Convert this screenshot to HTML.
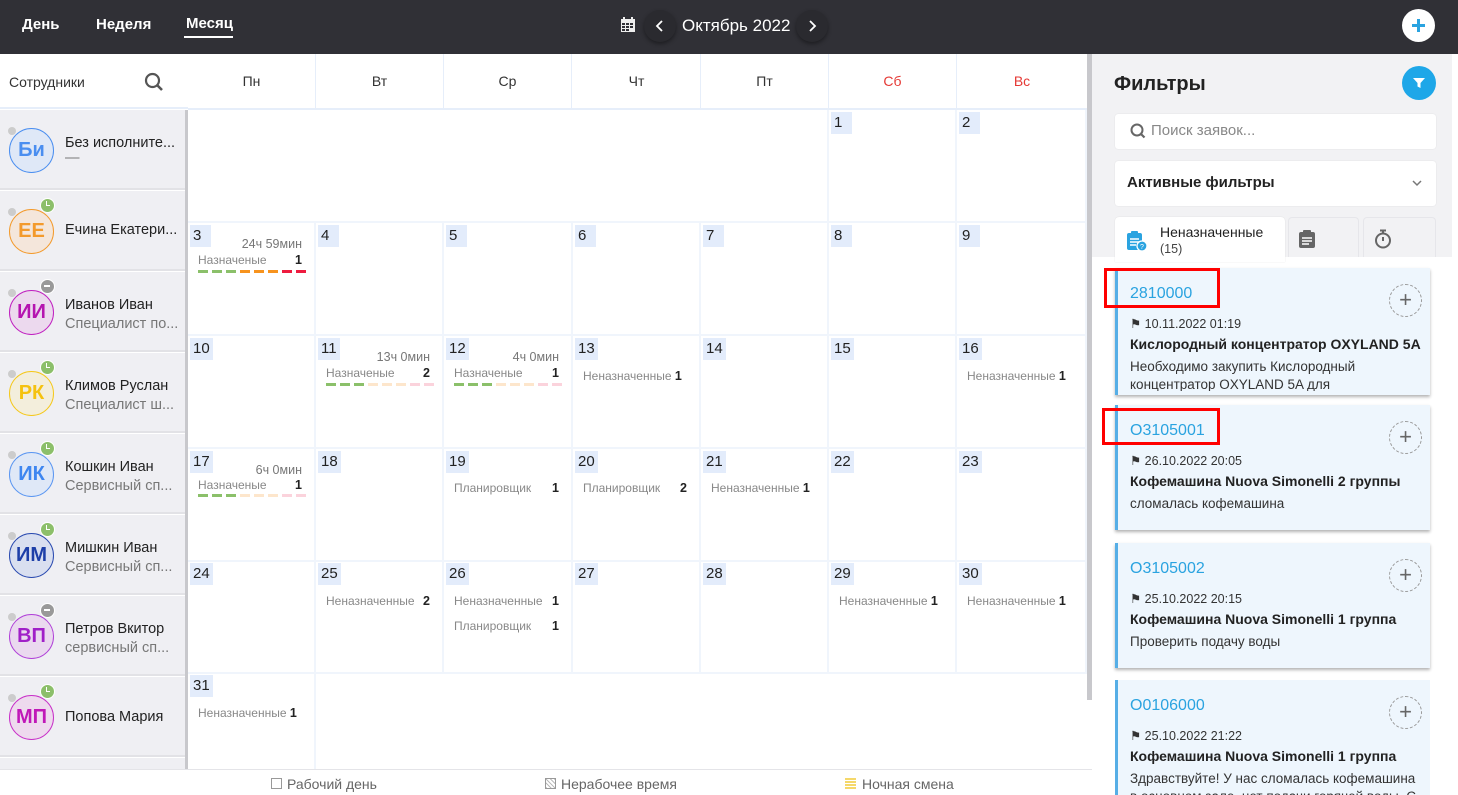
<!DOCTYPE html>
<html><head><meta charset="utf-8"><style>
*{box-sizing:border-box;margin:0;padding:0}
html,body{width:1458px;height:795px;overflow:hidden}
body{position:relative;background:#fff;font-family:"Liberation Sans",Roboto,sans-serif;color:#222}
.a{position:absolute}
.top{left:0;top:0;width:1458px;height:54px;background:#303036}
.tab{color:#fff;font-weight:bold;font-size:15px;top:16px}
.emp{left:0;width:185px;height:80px;background:#efeff3;border-bottom:2px solid #e2e2e6}
.av{position:absolute;left:9px;top:18px;width:45px;height:45px;border-radius:50%;border:1.5px solid;text-align:center;line-height:43px;font-size:20px;font-weight:bold}
.dot{position:absolute;left:8px;top:17px;width:8px;height:8px;border-radius:50%;background:#ccc}
.bd{position:absolute;left:40px;top:7px;width:15px;height:15px;border-radius:50%;background:#8cbf6a;border:1.5px solid #fff}
.bd:after{content:"";position:absolute;left:5px;top:2px;width:3px;height:4px;border-left:1.5px solid #fff;border-bottom:1.5px solid #fff}
.bd.g{background:#999}
.bd.g:after{left:3px;top:5px;width:6px;height:0;border:0;border-top:2px solid #fff}
.nm{position:absolute;left:65px;top:25px;font-size:14.5px;color:#222;white-space:nowrap}
.sb{position:absolute;left:65px;top:44px;font-size:14.5px;color:#777;white-space:nowrap}
.dh{top:54px;height:55px;width:128px;border-right:1px solid #e6eefa;text-align:center;line-height:55px;font-size:14px;color:#333}
.c{width:128px;height:113px;border-right:2px solid #f0f5fc;border-bottom:2px solid #f0f5fc}
.n{position:absolute;left:2px;top:2px;min-width:21px;height:22px;padding:0 3px;background:#e3ecfb;font-size:15px;line-height:22px;color:#222}
.t{position:absolute;right:12px;top:14px;font-size:12.5px;color:#777;white-space:nowrap}
.l{position:absolute;left:10px;right:12px;font-size:12px;color:#888;display:flex;justify-content:space-between;white-space:nowrap}
.l b{color:#222;font-size:12.5px}
.bars{position:absolute;left:10px;top:47px;display:flex;gap:4px}
.bars i{display:block;width:10px;height:3px}
.card{left:1115px;width:315px;background:#eef6fd;border-left:3px solid #56aee6;box-shadow:0 2px 3px rgba(0,0,0,.3);overflow:hidden}
.id{position:absolute;left:12px;top:17px;color:#2aa3e0;font-size:16px}
.pl{position:absolute;right:8px;top:16px;width:33px;height:33px;border-radius:50%;border:1px dashed #999;text-align:center;line-height:30px;font-size:22px;color:#666}
.dt{position:absolute;left:12px;top:48px;font-size:12.5px;color:#333}
.tl{position:absolute;left:12px;top:68px;font-size:14px;font-weight:bold;color:#222;white-space:nowrap}
.ds{position:absolute;left:12px;top:90px;font-size:13.5px;color:#333;line-height:18px;width:300px}
.red{border:3px solid #f00}
</style></head><body>
<div class="a top"></div>
<div class="a tab" style="left:22px">День</div>
<div class="a tab" style="left:96px">Неделя</div>
<div class="a tab" style="left:186px;top:15px">Месяц</div>
<div class="a" style="left:184px;top:36px;width:49px;height:2px;background:#fff"></div>
<svg class="a" style="left:620px;top:16px" width="16" height="17" viewBox="0 0 16 17"><rect x="1" y="3" width="14" height="13" fill="#eee"/><rect x="3" y="1" width="2" height="4" fill="#eee"/><rect x="11" y="1" width="2" height="4" fill="#eee"/><g fill="#303036"><rect x="2" y="7" width="3" height="2"/><rect x="6" y="7" width="3" height="2"/><rect x="10" y="7" width="3" height="2"/><rect x="2" y="10" width="3" height="2"/><rect x="6" y="10" width="3" height="2"/><rect x="10" y="10" width="3" height="2"/><rect x="2" y="13" width="3" height="2"/><rect x="6" y="13" width="3" height="2"/></g></svg>
<div class="a" style="left:644px;top:10px;width:32px;height:32px;border-radius:50%;background:#2a2a2f;box-shadow:0 2px 4px rgba(0,0,0,.4)"></div>
<svg class="a" style="left:654px;top:19px" width="12" height="14" viewBox="0 0 12 14"><path d="M8 2L3 7l5 5" fill="none" stroke="#fff" stroke-width="1.8"/></svg>
<div class="a" style="left:682px;top:16px;color:#fff;font-size:17px">Октябрь 2022</div>
<div class="a" style="left:796px;top:10px;width:32px;height:32px;border-radius:50%;background:#2a2a2f;box-shadow:0 2px 4px rgba(0,0,0,.4)"></div>
<svg class="a" style="left:806px;top:19px" width="12" height="14" viewBox="0 0 12 14"><path d="M4 2l5 5-5 5" fill="none" stroke="#fff" stroke-width="1.8"/></svg>
<div class="a" style="left:1402px;top:9px;width:33px;height:33px;border-radius:50%;background:#fff"></div>
<svg class="a" style="left:1411px;top:18px" width="15" height="15" viewBox="0 0 15 15"><path d="M7.5 1v13M1 7.5h13" stroke="#2aa3e0" stroke-width="3"/></svg>

<div class="a" style="left:0;top:54px;width:188px;height:55px;border-bottom:2px solid #e6eefa"></div>
<div class="a" style="left:9px;top:74px;font-size:14px;color:#333">Сотрудники</div>
<svg class="a" style="left:144px;top:72px" width="20" height="20" viewBox="0 0 20 20"><circle cx="8.5" cy="8.5" r="6.5" fill="none" stroke="#555" stroke-width="2.2"/><path d="M13.5 13.5l4.5 4.5" stroke="#555" stroke-width="2.6"/></svg>

<div class="a emp" style="top:110px"><div class="dot"></div><div class="av" style="color:#4a8ef0;border-color:#4a8ef0;background:#dfe8f7">Би</div><div class="nm">Без исполните...</div><div class="sb" style="top:40px">—</div></div>
<div class="a emp" style="top:191px"><div class="dot"></div><div class="av" style="color:#f39a2c;border-color:#f39a2c;background:#f4e6db">ЕЕ</div><div class="bd"></div><div class="nm" style="top:31px">Ечина Екатери...</div></div>
<div class="a emp" style="top:272px"><div class="dot"></div><div class="av" style="color:#b514b0;border-color:#c020c0;background:#ecd9ee">ИИ</div><div class="bd g"></div><div class="nm">Иванов Иван</div><div class="sb">Специалист по...</div></div>
<div class="a emp" style="top:353px"><div class="dot"></div><div class="av" style="color:#f5c20f;border-color:#f5c81a;background:#f3eedc">РК</div><div class="bd"></div><div class="nm">Климов Руслан</div><div class="sb">Специалист ш...</div></div>
<div class="a emp" style="top:434px"><div class="dot"></div><div class="av" style="color:#3e86f0;border-color:#5a96f2;background:#dfe8f7">ИК</div><div class="bd"></div><div class="nm">Кошкин Иван</div><div class="sb">Сервисный сп...</div></div>
<div class="a emp" style="top:515px"><div class="dot"></div><div class="av" style="color:#1e3fa8;border-color:#2a4ab0;background:#d9dff0">ИМ</div><div class="bd"></div><div class="nm">Мишкин Иван</div><div class="sb">Сервисный сп...</div></div>
<div class="a emp" style="top:596px"><div class="dot"></div><div class="av" style="color:#a020c8;border-color:#b040d8;background:#ead9ef">ВП</div><div class="bd g"></div><div class="nm">Петров Вкитор</div><div class="sb">сервисный сп...</div></div>
<div class="a emp" style="top:677px"><div class="dot"></div><div class="av" style="color:#c018b8;border-color:#c830c8;background:#eedaee">МП</div><div class="bd"></div><div class="nm" style="top:32px">Попова Мария</div></div>
<div class="a emp" style="top:758px;height:12px;border:0"></div>
<div class="a" style="left:185px;top:110px;width:3px;height:660px;background:#c8c8cc"></div>

<div class="a dh" style="left:188px">Пн</div><div class="a dh" style="left:316px">Вт</div><div class="a dh" style="left:444px">Ср</div><div class="a dh" style="left:573px">Чт</div><div class="a dh" style="left:701px">Пт</div><div class="a dh" style="left:829px;color:#e53935">Сб</div><div class="a dh" style="left:957px;color:#e53935;width:130px;border:0">Вс</div>
<div class="a" style="left:188px;top:108px;width:899px;height:2px;background:#e6eefa"></div>

<div class="a c" style="left:188px;top:110px;width:641px"></div>
<div class="a c" style="left:829px;top:110px"><div class="n">1</div></div>
<div class="a c" style="left:957px;top:110px;width:130px"><div class="n">2</div></div>

<div class="a c" style="left:188px;top:223px"><div class="n">3</div><div class="t">24ч 59мин</div><div class="l" style="top:30px"><span>Назначеные</span><b>1</b></div><div class="bars"><i style="background:#8bc06a"></i><i style="background:#8bc06a"></i><i style="background:#8bc06a"></i><i style="background:#f7931e"></i><i style="background:#f7931e"></i><i style="background:#f7931e"></i><i style="background:#ee1c3f"></i><i style="background:#ee1c3f"></i></div></div>
<div class="a c" style="left:316px;top:223px"><div class="n">4</div></div>
<div class="a c" style="left:444px;top:223px;width:129px"><div class="n">5</div></div>
<div class="a c" style="left:573px;top:223px"><div class="n">6</div></div>
<div class="a c" style="left:701px;top:223px"><div class="n">7</div></div>
<div class="a c" style="left:829px;top:223px"><div class="n">8</div></div>
<div class="a c" style="left:957px;top:223px;width:130px"><div class="n">9</div></div>

<div class="a c" style="left:188px;top:336px"><div class="n">10</div></div>
<div class="a c" style="left:316px;top:336px"><div class="n">11</div><div class="t">13ч 0мин</div><div class="l" style="top:30px"><span>Назначеные</span><b>2</b></div><div class="bars"><i style="background:#8bc06a"></i><i style="background:#8bc06a"></i><i style="background:#8bc06a"></i><i style="background:#fde6cc"></i><i style="background:#fde6cc"></i><i style="background:#fde6cc"></i><i style="background:#fbd3dc"></i><i style="background:#fbd3dc"></i></div></div>
<div class="a c" style="left:444px;top:336px;width:129px"><div class="n">12</div><div class="t">4ч 0мин</div><div class="l" style="top:30px"><span>Назначеные</span><b>1</b></div><div class="bars"><i style="background:#8bc06a"></i><i style="background:#8bc06a"></i><i style="background:#8bc06a"></i><i style="background:#fde6cc"></i><i style="background:#fde6cc"></i><i style="background:#fde6cc"></i><i style="background:#fbd3dc"></i><i style="background:#fbd3dc"></i></div></div>
<div class="a c" style="left:573px;top:336px"><div class="n">13</div><div class="l" style="top:33px"><span>Неназначенные <b>1</b></span></div></div>
<div class="a c" style="left:701px;top:336px"><div class="n">14</div></div>
<div class="a c" style="left:829px;top:336px"><div class="n">15</div></div>
<div class="a c" style="left:957px;top:336px;width:130px"><div class="n">16</div><div class="l" style="top:33px"><span>Неназначенные <b>1</b></span></div></div>

<div class="a c" style="left:188px;top:449px"><div class="n">17</div><div class="t">6ч 0мин</div><div class="l" style="top:29px"><span>Назначеные</span><b>1</b></div><div class="bars" style="top:45px"><i style="background:#8bc06a"></i><i style="background:#8bc06a"></i><i style="background:#8bc06a"></i><i style="background:#fde6cc"></i><i style="background:#fde6cc"></i><i style="background:#fde6cc"></i><i style="background:#fbd3dc"></i><i style="background:#fbd3dc"></i></div></div>
<div class="a c" style="left:316px;top:449px"><div class="n">18</div></div>
<div class="a c" style="left:444px;top:449px;width:129px"><div class="n">19</div><div class="l" style="top:32px"><span>Планировщик</span><b>1</b></div></div>
<div class="a c" style="left:573px;top:449px"><div class="n">20</div><div class="l" style="top:32px"><span>Планировщик</span><b>2</b></div></div>
<div class="a c" style="left:701px;top:449px"><div class="n">21</div><div class="l" style="top:32px"><span>Неназначенные <b>1</b></span></div></div>
<div class="a c" style="left:829px;top:449px"><div class="n">22</div></div>
<div class="a c" style="left:957px;top:449px;width:130px"><div class="n">23</div></div>

<div class="a c" style="left:188px;top:561px"><div class="n">24</div></div>
<div class="a c" style="left:316px;top:561px"><div class="n">25</div><div class="l" style="top:33px"><span>Неназначенные</span><b>2</b></div></div>
<div class="a c" style="left:444px;top:561px;width:129px"><div class="n">26</div><div class="l" style="top:33px"><span>Неназначенные</span><b>1</b></div><div class="l" style="top:58px"><span>Планировщик</span><b>1</b></div></div>
<div class="a c" style="left:573px;top:561px"><div class="n">27</div></div>
<div class="a c" style="left:701px;top:561px"><div class="n">28</div></div>
<div class="a c" style="left:829px;top:561px"><div class="n">29</div><div class="l" style="top:33px"><span>Неназначенные <b>1</b></span></div></div>
<div class="a c" style="left:957px;top:561px;width:130px"><div class="n">30</div><div class="l" style="top:33px"><span>Неназначенные <b>1</b></span></div></div>

<div class="a c" style="left:188px;top:673px;height:97px;border-bottom:0"><div class="n">31</div><div class="l" style="top:33px"><span>Неназначенные <b>1</b></span></div></div>

<div class="a" style="left:1087px;top:54px;width:5px;height:646px;background:#c8c8cc"></div>
<div class="a" style="left:0;top:769px;width:1092px;height:1px;background:#e4e4e8"></div>
<div class="a" style="left:271px;top:776px;font-size:14px;color:#666"><span style="display:inline-block;width:11px;height:11px;border:1px solid #999;margin-right:5px"></span>Рабочий день</div>
<div class="a" style="left:545px;top:776px;font-size:14px;color:#666"><span style="display:inline-block;width:11px;height:11px;border:1px solid #999;background:repeating-linear-gradient(45deg,#bbb 0 1px,#fff 1px 3px);margin-right:5px"></span>Нерабочее время</div>
<div class="a" style="left:845px;top:776px;font-size:14px;color:#666"><span style="display:inline-block;width:11px;height:11px;background:repeating-linear-gradient(#f5d86a 0 2px,#fff 2px 3px);margin-right:6px"></span>Ночная смена</div>

<div class="a" style="left:1092px;top:54px;width:366px;height:741px;background:#f2f2f4"></div>
<div class="a" style="left:1092px;top:257px;width:360px;height:538px;background:#fff"></div>
<div class="a" style="left:1452px;top:54px;width:6px;height:741px;background:#fff"></div>
<div class="a" style="left:1114px;top:73px;font-size:20px;font-weight:bold;color:#222">Фильтры</div>
<div class="a" style="left:1402px;top:66px;width:34px;height:34px;border-radius:50%;background:#1ea7e8"></div>
<svg class="a" style="left:1411px;top:76px" width="16" height="14" viewBox="0 0 16 14"><path d="M2 2h12l-4.5 5v5l-3-1.5V7z" fill="#fff"/></svg>
<div class="a" style="left:1115px;top:114px;width:321px;height:35px;background:#fff;border-radius:3px;box-shadow:0 0 1px rgba(0,0,0,.15)"></div>
<svg class="a" style="left:1129px;top:122px" width="18" height="18" viewBox="0 0 18 18"><circle cx="8" cy="8" r="5.5" fill="none" stroke="#666" stroke-width="2"/><path d="M12 12l3.5 3.5" stroke="#666" stroke-width="2.2"/></svg>
<div class="a" style="left:1151px;top:122px;font-size:15px;color:#888">Поиск заявок...</div>
<div class="a" style="left:1115px;top:161px;width:321px;height:45px;background:#fff;border-radius:3px;box-shadow:0 0 1px rgba(0,0,0,.15)"></div>
<div class="a" style="left:1127px;top:174px;font-size:15px;font-weight:bold;color:#222">Активные фильтры</div>
<svg class="a" style="left:1411px;top:179px" width="12" height="8" viewBox="0 0 12 8"><path d="M2 2l4 4 4-4" fill="none" stroke="#777" stroke-width="1.5"/></svg>
<div class="a" style="left:1115px;top:217px;width:170px;height:45px;background:#fff;border-radius:4px 4px 0 0;box-shadow:0 0 1px rgba(0,0,0,.15)"></div>
<div class="a" style="left:1288px;top:217px;width:71px;height:40px;background:#f2f2f4;border:1px solid #e6e6ea;border-bottom:0;border-radius:4px 4px 0 0"></div>
<div class="a" style="left:1363px;top:217px;width:73px;height:40px;background:#f2f2f4;border:1px solid #e6e6ea;border-bottom:0;border-radius:4px 4px 0 0"></div>
<svg class="a" style="left:1126px;top:230px" width="22" height="22" viewBox="0 0 22 22"><rect x="1" y="3" width="15" height="17" rx="2" fill="#2aa3e0"/><rect x="5" y="1" width="7" height="4" rx="1" fill="#2aa3e0"/><path d="M4 9h9M4 12h9M4 15h6" stroke="#fff" stroke-width="1.5"/><circle cx="16" cy="16" r="5" fill="#2aa3e0" stroke="#fff" stroke-width="1.3"/><text x="16" y="19" font-size="7" fill="#fff" text-anchor="middle" font-family="Liberation Sans">?</text></svg>
<div class="a" style="left:1160px;top:224px;font-size:14px;color:#222">Неназначенные</div>
<div class="a" style="left:1160px;top:242px;font-size:12.5px;color:#444">(15)</div>
<svg class="a" style="left:1298px;top:229px" width="18" height="20" viewBox="0 0 18 20"><rect x="1" y="3" width="16" height="16" rx="2" fill="#666"/><rect x="5" y="1" width="8" height="4" rx="1" fill="#666"/><path d="M4 9h10M4 12h10M4 15h7" stroke="#fff" stroke-width="1.5"/></svg>
<svg class="a" style="left:1374px;top:229px" width="18" height="20" viewBox="0 0 18 20"><circle cx="9" cy="11.5" r="7" fill="none" stroke="#666" stroke-width="2"/><path d="M6 1.5h6M9 2v3M9 8v4" stroke="#666" stroke-width="2"/></svg>

<div class="a card" style="top:268px;height:127px"><div class="id">2810000</div><div class="pl">+</div><div class="dt">⚑ 10.11.2022 01:19</div><div class="tl">Кислородный концентратор OXYLAND 5A</div><div class="ds" style="height:33px;overflow:hidden">Необходимо закупить Кислородный концентратор OXYLAND 5A для</div></div>
<div class="a red" style="left:1104px;top:268px;width:116px;height:40px"></div>
<div class="a card" style="top:405px;height:125px"><div class="id">О3105001</div><div class="pl">+</div><div class="dt">⚑ 26.10.2022 20:05</div><div class="tl">Кофемашина Nuova Simonelli 2 группы</div><div class="ds">сломалась кофемашина</div></div>
<div class="a red" style="left:1102px;top:408px;width:118px;height:37px"></div>
<div class="a card" style="top:543px;height:125px"><div class="id">О3105002</div><div class="pl">+</div><div class="dt">⚑ 25.10.2022 20:15</div><div class="tl">Кофемашина Nuova Simonelli 1 группа</div><div class="ds">Проверить подачу воды</div></div>
<div class="a card" style="top:680px;height:115px;box-shadow:none"><div class="id">О0106000</div><div class="pl">+</div><div class="dt">⚑ 25.10.2022 21:22</div><div class="tl">Кофемашина Nuova Simonelli 1 группа</div><div class="ds" style="white-space:nowrap">Здравствуйте! У нас сломалась кофемашина<br>в основном зале, нет подачи горячей воды. С</div></div>
</body></html>
